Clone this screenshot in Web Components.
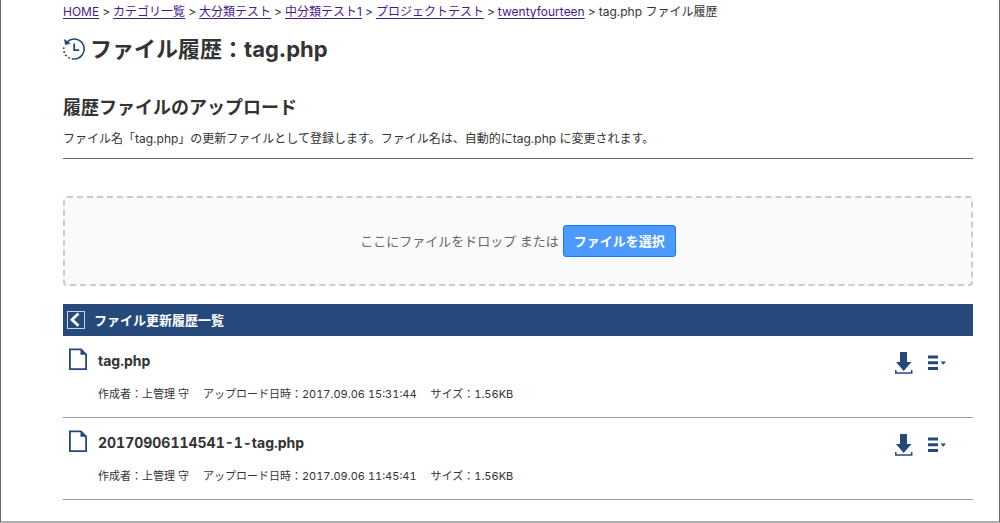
<!DOCTYPE html>
<html lang="ja">
<head>
<meta charset="utf-8">
<meta name="viewport" content="width=device-width, initial-scale=1">
<title>tag.php ファイル履歴</title>
<style>
  body {
    margin: 0;
    background: #fff;
    color: #333;
    font-family: Inter, "Noto Sans CJK JP", sans-serif;
    font-size: 12px;
    line-height: 20px;
    --navy: #25497b;
  }
</style>
</head>
<body>
<history-page>
  <bread-crumbs slot="crumbs" data-current="tag.php ファイル履歴">
    <a href="#home">HOME</a>
    <a href="#categories">カテゴリ一覧</a>
    <a href="#large">大分類テスト</a>
    <a href="#middle">中分類テスト1</a>
    <a href="#project">プロジェクトテスト</a>
    <a href="#theme">twentyfourteen</a>
  </bread-crumbs>
  <page-title>ファイル履歴：tag.php</page-title>
  <section-intro>
    <span slot="heading">履歴ファイルのアップロード</span>
    ファイル名「tag.php」の更新ファイルとして登録します。ファイル名は、自動的にtag.php に変更されます。
  </section-intro>
  <drop-zone>ここにファイルをドロップ または</drop-zone>
  <history-list>
    <span slot="heading">ファイル更新履歴一覧</span>
    <file-row>
      <span slot="name">tag.php</span>
      <span slot="meta">作成者：上管理 守</span>
      <span slot="meta">アップロード日時：2017.09.06 15:31:44</span>
      <span slot="meta">サイズ：1.56KB</span>
    </file-row>
    <file-row>
      <span slot="name">20170906114541-1-tag.php</span>
      <span slot="meta">作成者：上管理 守</span>
      <span slot="meta">アップロード日時：2017.09.06 11:45:41</span>
      <span slot="meta">サイズ：1.56KB</span>
    </file-row>
  </history-list>
</history-page>

<script>
const define = (name, html, setup) => {
  customElements.define(name, class extends HTMLElement {
    constructor() {
      super();
      this.attachShadow({ mode: "open" }).innerHTML = html;
    }
    connectedCallback() {
      if (setup) setup(this, this.shadowRoot);
    }
  });
};

define("history-page", `
  <style>
    :host { display: block; box-sizing: border-box; min-height: 100vh; padding: 2px 26px 20px 62px;
            border: solid #666; border-width: 0 1px 2px; border-bottom-color: #b0b0b0; }
  </style>
  <slot name="crumbs"></slot>
  <main><slot></slot></main>
`);

define("bread-crumbs", `
  <style>
    :host { display: block; }
    ol { display: flex; flex-wrap: wrap; gap: 0 3px; margin: 0; padding: 0; list-style: none; }
    li { display: flex; gap: 3px; }
    a { color: #4b1a8a; text-underline-offset: 2px; }
  </style>
  <nav aria-label="パンくず"><ol></ol></nav>
`, (host, root) => {
  const list = root.querySelector("ol");
  if (list.children.length) return;
  for (const link of [...host.querySelectorAll("a")]) {
    const item = document.createElement("li");
    const mark = document.createElement("span");
    mark.textContent = ">";
    item.append(link, mark);
    list.append(item);
  }
  const current = document.createElement("li");
  current.textContent = host.dataset.current;
  list.append(current);
});

define("page-title", `
  <style>
    :host { display: block; margin-top: 11px; }
    h1 { display: flex; align-items: center; gap: 5px; margin: 0; font-size: 22px; line-height: 32px; font-weight: 700; }
    svg { flex: none; }
  </style>
  <h1>
    <svg width="22" height="22" viewBox="0 0 22 22" fill="none" stroke="#25497b" aria-hidden="true">
      <path d="M4.2 3.8A10 10 0 1 1 10.5 21" stroke-width="1.6"/>
      <path d="M10.5 21A10 10 0 0 1 1 8.5" stroke-width="1.7" stroke-dasharray="1.8 2"/>
      <path d="M1 1l1.2 6 5.5-1.6z" fill="#25497b" stroke="none"/>
      <path d="M11.2 5.5v6.7h5" stroke-width="1.8"/>
    </svg>
    <span><slot></slot></span>
  </h1>
`);

define("section-intro", `
  <style>
    :host { display: block; margin-top: 30px; padding-bottom: 9px; border-bottom: 1px solid #666; }
    h2 { margin: 0 0 8px; font-size: 18px; line-height: 26px; font-weight: 700; }
    p { margin: 0; }
  </style>
  <h2><slot name="heading"></slot></h2>
  <p><slot></slot></p>
`);

define("drop-zone", `
  <style>
    :host { display: flex; flex-wrap: wrap; align-items: center; justify-content: center; gap: 4px;
            box-sizing: border-box; min-height: 90px; margin-top: 37px; padding: 16px;
            border: 2px dashed #ccc; border-radius: 4px; background: #fafafa; color: #666; font-size: 13px; }
    button { height: 32px; padding: 0 10px; border: 1px solid #0f7bff; border-radius: 3px;
             background: #4d9aff; color: #fff; font: inherit; font-weight: 600; }
  </style>
  <span><slot></slot></span>
  <button type="button">ファイルを選択</button>
`);

define("history-list", `
  <style>
    :host { display: block; margin-top: 18px; }
    header { display: flex; align-items: center; gap: 9px; padding: 0 4px; height: 32px; background: var(--navy); color: #fff; }
    h2 { margin: 0; font-size: 13px; line-height: 20px; font-weight: 700; }
    button { display: flex; padding: 0; border: 0; background: none; }
  </style>
  <header>
    <button type="button" aria-label="戻る">
      <svg width="18" height="18" viewBox="0 0 18 18" fill="none" stroke="#fff">
        <rect x=".5" y=".5" width="17" height="17" stroke="#c5d0e0"/>
        <path d="M11.5 2.5L5 8.7l6.5 6" stroke-width="2.8"/>
      </svg>
    </button>
    <h2><slot name="heading"></slot></h2>
  </header>
  <slot></slot>
`);

define("file-row", `
  <style>
    :host { display: flex; align-items: flex-start; box-sizing: border-box; min-height: 82px;
            padding: 12px 26px 12px 5px; border-bottom: 1px solid #9a9fa6; font-variant-numeric: tabular-nums; }
    svg { display: block; flex: none; }
    .body { flex: 1; margin-left: 10px; min-width: 0; }
    h3 { margin: 3px 0 13px; font-size: 14px; line-height: 20px; font-weight: 700; }
    .meta { display: flex; flex-wrap: wrap; gap: 0 14px; font-size: 11px; }
    .actions { display: flex; align-items: center; gap: 15px; margin-top: 4px; }
    button { padding: 0; border: 0; background: none; color: var(--navy); }
  </style>
  <svg width="20" height="24" viewBox="0 0 20 24" aria-hidden="true">
    <path d="M1.9 1.4H13l5.1 5.1v14.6H1.9z" fill="none" stroke="#25497b" stroke-width="1.8"/>
    <path d="M12.5 1v5.7h6z" fill="#25497b"/>
  </svg>
  <div class="body">
    <h3><slot name="name"></slot></h3>
    <div class="meta"><slot name="meta"></slot></div>
  </div>
  <div class="actions">
    <button type="button" aria-label="ダウンロード">
      <svg width="18" height="22" viewBox="0 0 18 22" fill="currentColor">
        <path d="M5 0h7v10h4.5L8.7 19 1 10h4z"/>
        <path d="M.8 18v3h15.9v-3" fill="none" stroke="currentColor" stroke-width="1.5"/>
      </svg>
    </button>
    <button type="button" aria-label="メニュー">
      <svg width="19" height="18" viewBox="0 0 19 18" fill="currentColor">
        <path d="M0 1.5h10v3H0zM0 7.3h10v3H0zM0 13.1h10v3H0zM12.5 7.5H18l-2.7 3.3z"/>
      </svg>
    </button>
  </div>
`);
</script>
</body>
</html>
